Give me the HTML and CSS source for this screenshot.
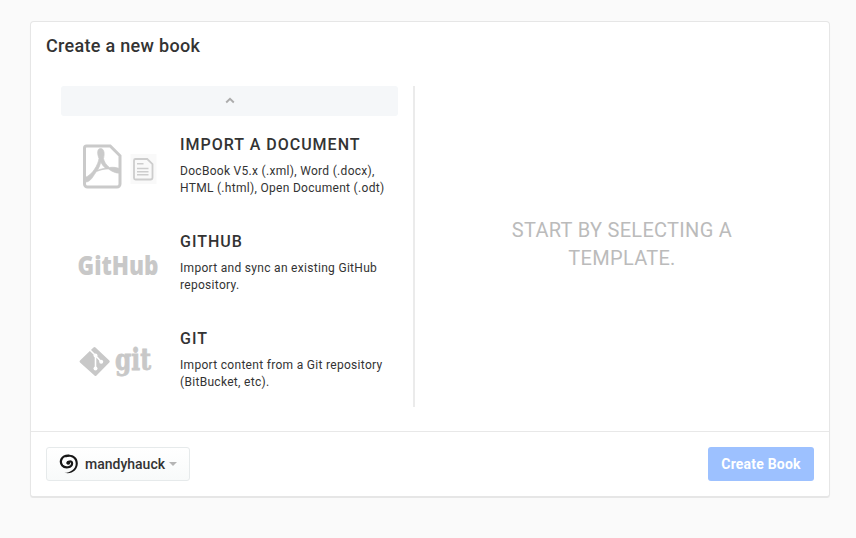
FILE: index.html
```html
<!DOCTYPE html>
<html lang="en">
<head>
<meta charset="utf-8">
<title>Create a new book</title>
<link rel="stylesheet" href="styles.css">
</head>
<body>
<main class="modal">
  <header class="modal-header"><h1>Create a new book</h1></header>
  <div class="modal-body">
    <section class="templates">
      <button class="scroll-up" aria-label="Scroll up">
        <svg width="10" height="7" viewBox="0 0 10 7"><path d="M1.200 5.500 5 1.800l3.800 3.700" fill="none" stroke="#acacac" stroke-width="1.900"/></svg>
      </button>
      <article class="template">
        <svg class="logo" width="100" height="64" viewBox="0 0 100 64">
          <path d="M16.500 11h23.700L50 20.800V49a3 3 0 0 1-3 3H17.500a3 3 0 0 1-3-3V13a2 2 0 0 1 2-2z" fill="none" stroke="#cacaca" stroke-width="3"/>
          <path d="M30.500 13.500c-3.500 0-3.400 5.200-1.500 10-.8 6-6.500 16.500-14 19v4.500c6 .5 8.500-7 11.500-10.500 4.500-1.800 8.500-2.800 12-2.500 5 3.500 9 4.500 11.500 4V34c-2.500-1.700-7-2-10.500-1.500-3.500-2.500-5.500-6-6-9 1.200-4.500 1-10-3-10zm.3 13.500c1.200 2.500 2.700 4.500 4.700 6.200-2.700.3-5.200 1-8 2 1.600-2.700 2.700-5.400 3.300-8.200z" fill="#cacaca" stroke="#cacaca" stroke-width=".7"/>
          <path d="M60.500 19h26v30h-26z" fill="#f9f9f9"/>
          <path d="M65.500 24h11.700l5.300 5.200v13.300a2 2 0 0 1-2 2h-15a1.500 1.500 0 0 1-1.500-1.500V25.500a1.500 1.500 0 0 1 1.500-1.500z" fill="none" stroke="#cdcdcd" stroke-width="1.800"/>
          <path d="M67 28.800h6.500M67 33.500h11.500M67 36.700h11.500M67 39.800h11.500" stroke="#cdcdcd" stroke-width="1.500"/>
        </svg>
        <div class="details"><h2>Import a document</h2><p>DocBook V5.x (.xml), Word (.docx), HTML (.html), Open Document (.odt)</p></div>
      </article>
      <article class="template">
        <svg class="logo" width="100" height="64" viewBox="0 0 100 64">
          <text class="github-word" x="7.500" y="43" textLength="81" lengthAdjust="spacingAndGlyphs">GitHub</text>
        </svg>
        <div class="details"><h2>GitHub</h2><p>Import and sync an existing GitHub repository.</p></div>
      </article>
      <article class="template">
        <svg class="logo" width="100" height="64" viewBox="0 0 100 64">
          <path d="M25.500 18.500 39.300 31.600q1 1 0 2L26.500 46.500q-1 1-2 0L10 33.500q-1-1 0-2l13.500-13q1-.9 2 0z" fill="#c8c8c8"/>
          <path d="m19.500 20.500 6 6v13m0-13 5.500 6" fill="none" stroke="#fff" stroke-width="1.600"/>
          <circle cx="25.500" cy="26.500" r="2" fill="#fff"/><circle cx="25.500" cy="39.500" r="2" fill="#fff"/><circle cx="31.200" cy="32.800" r="2" fill="#fff"/>
          <text class="git-word" x="45" y="41" textLength="36" lengthAdjust="spacingAndGlyphs">git</text>
        </svg>
        <div class="details"><h2>Git</h2><p>Import content from a Git repository (BitBucket, etc).</p></div>
      </article>
    </section>
    <section class="preview"><p>Start by selecting a template.</p></section>
  </div>
  <footer class="modal-footer">
    <button class="account">
      <svg class="avatar" width="20" height="20" viewBox="0 0 20 20">
        <path d="M8.500 9.200C8.300 7.500 13 6.300 13.100 9.300 13.100 13.900 5.800 14.400 3.300 11.500 0 7.400 2.800 1.300 9.500 1.500" fill="none" stroke="#171717" stroke-width="2.200" stroke-linecap="round"/>
        <circle cx="9.400" cy="9" r="1.800" fill="#171717"/>
        <path d="M6.500 2C11-1 19 2 18.800 9.500 18.600 16 13 20.500 5.500 18.800c6-.2 11.300-3.800 11.200-9.300C16.600 4 11.500 1.500 6.500 3.500z" fill="#171717"/>
      </svg>
      <span>mandyhauck</span><i class="caret"></i>
    </button>
    <button class="create">Create Book</button>
  </footer>
</main>
</body>
</html>
```
FILE: styles.css
```css
* { box-sizing: border-box; }
body { margin: 0; padding: 21px 26px 0 30px; background: #fafafa; color: #333; font-family: Roboto, sans-serif; }
h1, h2, p { margin: 0; }
button { font: inherit; }
.modal { width: 800px; height: 477px; display: flex; flex-direction: column; background: #fff; border: 1px solid #e6e6e6; border-bottom-width: 2px; border-radius: 4px; box-shadow: 0 1px 1px rgba(0,0,0,.04); }
.modal-header { flex: none; height: 64px; padding: 12px 15px; }
h1 { font-size: 18px; line-height: 24px; font-weight: 500; letter-spacing: .3px; }
.modal-body { flex: none; height: 321px; display: flex; padding-left: 30px; }
.templates { width: 354px; padding-right: 15px; border-right: 2px solid #ebebeb; }
.scroll-up { width: 100%; height: 30px; display: flex; align-items: center; justify-content: center; padding: 0 0 2px; border: 0; border-radius: 3px; background: #f5f7f9; }
.template { height: 97px; padding: 19px 0 0 9px; display: flex; }
.logo { flex: none; overflow: visible; }
.details { flex: none; width: 225px; padding-left: 10px; }
h2 { font-size: 16px; line-height: 20px; font-weight: 500; letter-spacing: 1px; text-transform: uppercase; }
.details p { margin-top: 8px; font-size: 12px; line-height: 17px; letter-spacing: .3px; }
.github-word { font: 800 27px "Open Sans", sans-serif; fill: #c8c8c8; }
.git-word { font: 700 29px "DejaVu Serif", serif; fill: #c8c8c8; stroke: #c8c8c8; stroke-width: .8px; }
.preview { flex: 1; display: flex; align-items: center; justify-content: center; padding-bottom: 5px; }
.preview p { width: 260px; text-align: center; color: #bbb; font-size: 20px; line-height: 28px; letter-spacing: .3px; text-transform: uppercase; }
.modal-footer { flex: none; height: 65px; margin-top: 24px; padding: 15px; display: flex; justify-content: space-between; border-top: 1px solid #e8e8e8; }
.account { width: 144px; height: 34px; display: flex; align-items: center; padding: 0 0 0 12px; border: 1px solid #e6eaeb; border-radius: 3px; background: linear-gradient(#fff, #f8fafa); color: #333; font-size: 14px; font-weight: 500; letter-spacing: 0; }
.avatar { flex: none; margin-right: 6px; }
.caret { margin-left: 4px; border: 4px solid transparent; border-top-color: #b5b5b5; border-bottom: 0; }
.create { width: 106px; height: 34px; padding: 0; border: 0; border-radius: 3px; background: #9dc1ff; color: #fff; font-size: 14px; font-weight: 700; letter-spacing: .2px; }
```
